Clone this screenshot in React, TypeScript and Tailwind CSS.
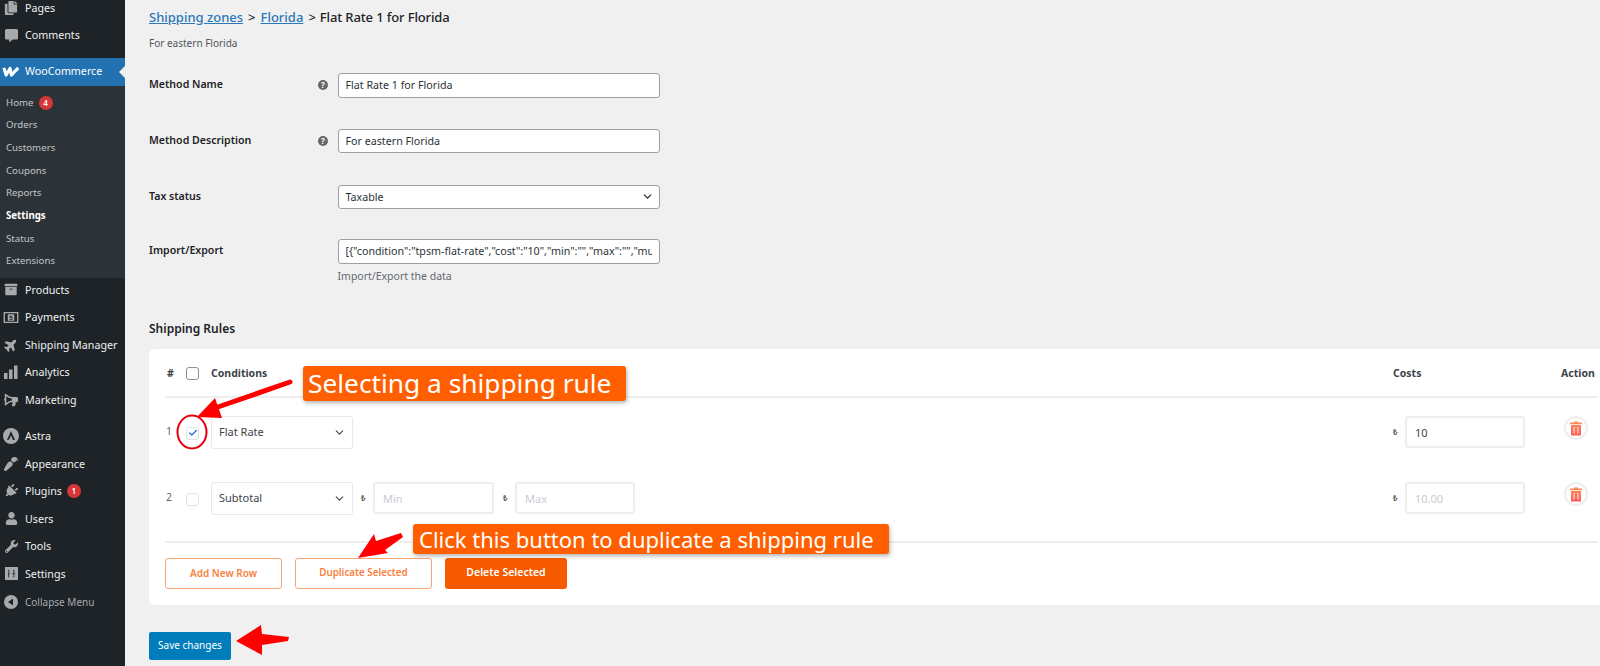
import type { ReactNode } from 'react'
import { ChevronDown, Check } from 'lucide-react'
import {
  FaArchive,
  FaBullhorn,
  FaCommentAlt,
  FaCopy,
  FaPaintBrush,
  FaPlane,
  FaPlug,
  FaUser,
  FaWrench,
} from 'react-icons/fa'

function PaymentsIcon() {
  return (
    <svg viewBox="0 0 16 14" className="h-[13px] w-[16px]">
      <path fill="#a7aaad" fillRule="evenodd" d="M0 1h16v12H0zM1.500 2.500v9h13v-9zM4.500 3.500h7v7h-7z" />
      <path fill="#1d2327" d="M6.500 5h3v1H7.500v.6h2v2.900h-3v-1h2v-.9h-2z" />
    </svg>
  )
}

function AnalyticsIcon() {
  return (
    <svg viewBox="0 0 14 14" className="h-[14px] w-[14px]" fill="#a7aaad">
      <rect x="0" y="8" width="3.500" height="6" />
      <rect x="5" y="4.500" width="3.500" height="9.500" />
      <rect x="10" y="0.500" width="3.500" height="13.500" />
    </svg>
  )
}

function AstraIcon() {
  return (
    <svg viewBox="0 0 16 16" className="h-[16px] w-[16px]">
      <circle cx="8" cy="8" r="8" fill="#a7aaad" />
      <path fill="#1d2327" d="M8 3 12 12H10L8 7.500 6.500 10.500 5.500 12H4z" />
    </svg>
  )
}

function SettingsIcon() {
  return (
    <svg viewBox="0 0 14 14" className="h-[13px] w-[13px]">
      <rect width="14" height="14" fill="#a7aaad" />
      <path fill="#1d2327" d="M3 6h2v1H4.500v4h-1V7H3zM9 3h1v4h1v1H8V7h1zM9 9h1v2H9zM3.500 3h1v2h-1z" />
    </svg>
  )
}

function CollapseIcon() {
  return (
    <svg viewBox="0 0 14 14" className="h-[14px] w-[14px]">
      <circle cx="7" cy="7" r="7" fill="#a7aaad" />
      <path fill="#1d2327" d="M9 3.500v7L4 7z" />
    </svg>
  )
}

function WooIcon() {
  return (
    <svg viewBox="0 0 20 12" className="h-[11px] w-[18px]">
      <path
        fill="none"
        stroke="#fff"
        strokeWidth="3.400"
        strokeLinejoin="round"
        d="M2 2 4.500 10 9 2.500 10.500 10 18 2"
      />
    </svg>
  )
}

function TrashIcon() {
  return (
    <svg viewBox="0 0 12 14" className="h-[15px] w-[12px]">
      <defs>
        <linearGradient id="trash" x1="0" y1="0" x2="0" y2="1">
          <stop offset="0" stopColor="#f9935a" />
          <stop offset="1" stopColor="#fb5a5a" />
        </linearGradient>
      </defs>
      <path fill="url(#trash)" d="M4 0h4v1h4v1.800H0V1h4zM1 3.500h10V14H1z" />
      <path fill="#ffd9c9" d="M3.500 5.500h1.200v6.500H3.500zM7.300 5.500h1.200v6.500H7.300z" />
    </svg>
  )
}

const topItems: [string, ReactNode][] = [
  ['Pages', <FaCopy className="h-[14px] w-[14px] text-[#a7aaad]" />],
  ['Comments', <FaCommentAlt className="h-[13px] w-[13px] text-[#a7aaad]" />],
]

const subItems = ['Home', 'Orders', 'Customers', 'Coupons', 'Reports', 'Settings', 'Status', 'Extensions']

const middleItems: [string, ReactNode][] = [
  ['Products', <FaArchive className="h-[13px] w-[14px] text-[#a7aaad]" />],
  ['Payments', <PaymentsIcon />],
  ['Shipping Manager', <FaPlane className="h-[14px] w-[14px] -rotate-45 text-[#a7aaad]" />],
  ['Analytics', <AnalyticsIcon />],
  ['Marketing', <FaBullhorn className="h-[14px] w-[14px] -scale-x-100 text-[#a7aaad]" />],
]

const bottomItems: [string, ReactNode][] = [
  ['Astra', <AstraIcon />],
  ['Appearance', <FaPaintBrush className="h-[14px] w-[14px] rotate-180 text-[#a7aaad]" />],
  ['Plugins', <FaPlug className="h-[14px] w-[14px] rotate-45 text-[#a7aaad]" />],
  ['Users', <FaUser className="h-[13px] w-[13px] text-[#a7aaad]" />],
  ['Tools', <FaWrench className="h-[13px] w-[13px] text-[#a7aaad]" />],
  ['Settings', <SettingsIcon />],
]

function Badge({ count }: { count: number }) {
  return (
    <span className="ml-[5px] flex h-[14px] w-[14px] items-center justify-center rounded-full bg-[#d63638] text-[8px] font-semibold text-white">
      {count}
    </span>
  )
}

function MenuItem({ label, icon, badge }: { label: string; icon: ReactNode; badge?: number }) {
  return (
    <div className="flex h-[27.5px] items-center text-[10.700px] text-[#f0f0f1]">
      <span className="flex w-[25px] shrink-0 justify-center pr-[3px]">{icon}</span>
      {label}
      {badge ? <Badge count={badge} /> : null}
    </div>
  )
}

function Sidebar() {
  return (
    <aside className="w-[125px] shrink-0 bg-[#1d2327]">
      <div className="-mt-[6px] pb-[8.500px]">
        {topItems.map(([label, icon]) => (
          <MenuItem key={label} label={label} icon={icon} />
        ))}
      </div>

      <div className="relative flex h-[28px] items-center bg-[#2271b1] text-[10.700px] text-white">
        <span className="flex w-[25px] shrink-0 justify-center pr-[3px]">
          <WooIcon />
        </span>
        WooCommerce
        <span className="absolute right-0 top-[8px] h-0 w-0 border-y-[6px] border-r-[6px] border-y-transparent border-r-[#f0f0f1]" />
      </div>

      <div className="bg-[#2c3338] pb-[5px] pt-[6px]">
        {subItems.map(item => (
          <div
            key={item}
            className={`flex h-[22.700px] items-center pl-[6px] text-[9.700px] ${
              item === 'Settings' ? 'font-bold text-white' : 'text-[#c3c4c7]'
            }`}
          >
            {item}
            {item === 'Home' ? <Badge count={4} /> : null}
          </div>
        ))}
      </div>

      <div className="-mt-[2px]">
        {middleItems.map(([label, icon]) => (
          <MenuItem key={label} label={label} icon={icon} />
        ))}
      </div>

      <div className="h-[9px]" />

      {bottomItems.map(([label, icon]) => (
        <MenuItem key={label} label={label} icon={icon} badge={label === 'Plugins' ? 1 : undefined} />
      ))}

      <div className="mt-[1px] flex h-[27.5px] items-center text-[10px] text-[#a7aaad]">
        <span className="flex w-[25px] shrink-0 justify-center pr-[3px]">
          <CollapseIcon />
        </span>
        Collapse Menu
      </div>
    </aside>
  )
}

function FormRow({ label, help, top, children }: { label: string; help?: boolean; top: string; children: ReactNode }) {
  return (
    <div className={`flex h-[24.500px] items-center ${top}`}>
      <label className="w-[169px] text-[10.600px] font-semibold text-[#1d2327]">{label}</label>
      <span className="flex w-[19.500px] justify-start">
        {help ? (
          <span className="flex h-[10px] w-[10px] items-center justify-center rounded-full bg-[#666] text-[8px] font-bold text-white">
            ?
          </span>
        ) : null}
      </span>
      {children}
    </div>
  )
}

function TextField({ value }: { value: string }) {
  return (
    <input
      readOnly
      value={value}
      className="h-[24.500px] w-[322px] rounded-[3px] border border-[#9ca1a7] bg-white px-[7px] text-[10.700px] text-[#2c3338] outline-none"
    />
  )
}

function RuleSelect({ value }: { value: string }) {
  return (
    <div className="flex h-[33px] w-[142px] items-center justify-between rounded-[3px] border border-[#e8e8e8] bg-white pl-[7px] pr-[6px] text-[11px] text-[#3c434a]">
      {value}
      <ChevronDown className="h-[13px] w-[13px] text-[#444]" strokeWidth={2} />
    </div>
  )
}

function Currency() {
  return <span className="w-[12px] text-[8px] font-bold leading-none text-[#666]">₺</span>
}

function RuleInput({ value, placeholder, width }: { value?: string; placeholder?: string; width: string }) {
  return (
    <input
      readOnly
      value={value ?? ''}
      placeholder={placeholder}
      className={`h-[32px] ${width} rounded-[3px] border-2 border-[#eeeeee] bg-white px-[8px] text-[11px] text-[#3c434a] outline-none placeholder:text-[#c9ccd1]`}
    />
  )
}

function RowAction() {
  return (
    <div className="-mt-[8px] ml-[39px] mr-[10px] flex h-[24px] w-[24px] items-center justify-center rounded-full border-2 border-[#eeeeee] bg-white">
      <TrashIcon />
    </div>
  )
}

function ShippingRules() {
  return (
    <section className="mt-[10px] w-[1470px] rounded-[6px] bg-white pb-[16px] pl-[16px] pr-[21px]">
      <div className="flex h-[49px] items-center border-b-2 border-[#eeeeee] pt-[3px] text-[10.500px] font-semibold text-[#3c434a]">
        <span className="w-[21px] pl-[2px] font-bold">#</span>
        <span className="mr-[12px] h-[13px] w-[13px] rounded-[3px] border border-[#8c8f94]" />
        <span className="flex-1 font-bold">Conditions</span>
        <span className="w-[168px] font-bold">Costs</span>
        <span className="w-[37px] font-bold">Action</span>
      </div>

      <div className="flex items-center pt-[18px]">
        <span className="w-[21px] pl-[1px] text-[10.500px] text-[#666]">1</span>
        <span className="mr-[12px] mt-[2px] flex h-[13px] w-[13px] items-center justify-center rounded-[3px] border border-[#e2e2e2]">
          <Check className="h-[10px] w-[10px] text-[#2a7fd5]" strokeWidth={3.500} />
        </span>
        <RuleSelect value="Flat Rate" />
        <div className="flex-1" />
        <Currency />
        <RuleInput value="10" width="w-[120px]" />
        <RowAction />
      </div>

      <div className="flex items-center pb-[26px] pt-[33px]">
        <span className="w-[21px] pl-[1px] text-[10.500px] text-[#666]">2</span>
        <span className="mr-[12px] mt-[2px] h-[13px] w-[13px] rounded-[3px] border border-[#e2e2e2]" />
        <RuleSelect value="Subtotal" />
        <span className="w-[8px]" />
        <Currency />
        <RuleInput placeholder="Min" width="w-[121px]" />
        <span className="w-[9px]" />
        <Currency />
        <RuleInput placeholder="Max" width="w-[120px]" />
        <div className="flex-1" />
        <Currency />
        <RuleInput placeholder="10.00" width="w-[120px]" />
        <RowAction />
      </div>

      <div className="flex gap-[13px] border-t-2 border-[#eeeeee] pt-[15px]">
        <button className="h-[31px] w-[117px] rounded-[3px] border border-[#f8a477] bg-white text-[10px] font-semibold text-[#f9803f]">
          Add New Row
        </button>
        <button className="h-[31px] w-[137px] rounded-[3px] border border-[#f8a477] bg-white text-[9.800px] font-semibold text-[#f9803f]">
          Duplicate Selected
        </button>
        <button className="h-[31px] w-[122px] rounded-[3px] bg-[#f55a00] text-[10.500px] font-semibold text-white">
          Delete Selected
        </button>
      </div>
    </section>
  )
}

function Annotations() {
  return (
    <>
      <div className="absolute left-[303px] top-[366px] flex h-[35px] w-[323px] items-center rounded-[3px] bg-[#ff5f00] pl-[5px] text-[26.300px] text-white shadow-[1px_2px_4px_rgba(0,0,0,0.3)]">
        Selecting a shipping rule
      </div>
      <div className="absolute left-[413px] top-[524px] flex h-[30px] w-[476px] items-center rounded-[3px] bg-[#ff5f00] pl-[6px] text-[22px] text-white shadow-[1px_2px_4px_rgba(0,0,0,0.3)]">
        Click this button to duplicate a shipping rule
      </div>

      <svg viewBox="0 0 120 78" className="absolute left-[175px] top-[375px] h-[78px] w-[120px]">
        <path d="M115 7 40 33" stroke="#f00" strokeWidth="5" strokeLinecap="round" fill="none" />
        <path d="M22 42 40 23 47 43z" fill="#f00" />
        <ellipse cx="17" cy="57" rx="14.500" ry="16.500" fill="none" stroke="#e8000b" strokeWidth="2" />
      </svg>

      <svg viewBox="0 0 50 30" className="absolute left-[355px] top-[531px] h-[30px] w-[50px]">
        <path d="M3 27 19 3 21 10 46 2 48 6 30 19 33 22z" fill="#f00" />
      </svg>

      <svg viewBox="0 0 60 34" className="absolute left-[233px] top-[623px] h-[34px] w-[60px]">
        <path d="M3 18 28 2 29 11 56 14 55 18 29 22 29 32z" fill="#f00" />
      </svg>
    </>
  )
}

export default function App() {
  return (
    <div className="relative flex h-[666px] w-[1600px] overflow-hidden bg-[#f0f0f1] font-['Noto_Sans',sans-serif]">
      <Sidebar />

      <main className="min-w-0 flex-1 pl-[24px] pt-[8px]">
        <h2 className="flex h-[20px] items-center gap-[5px] text-[13px] font-medium text-[#1d2327]">
          <a className="text-[#2a78b8] underline">Shipping zones</a>
          <span>&gt;</span>
          <a className="text-[#2a78b8] underline">Florida</a>
          <span>&gt;</span>
          <span className="-ml-[1px] tracking-[-0.01em]">Flat Rate 1 for Florida</span>
        </h2>
        <p className="mt-[8px] h-[14px] text-[10px] leading-[14px] text-[#50575e]">For eastern Florida</p>

        <FormRow label="Method Name" help top="mt-[23px]">
          <TextField value="Flat Rate 1 for Florida" />
        </FormRow>
        <FormRow label="Method Description" help top="mt-[31px]">
          <TextField value="For eastern Florida" />
        </FormRow>
        <FormRow label="Tax status" top="mt-[31.500px]">
          <div className="flex h-[24.500px] w-[322px] items-center justify-between rounded-[3px] border border-[#9ca1a7] bg-white pl-[7px] pr-[5px] text-[10.700px] text-[#2c3338]">
            Taxable
            <ChevronDown className="h-[13px] w-[13px]" strokeWidth={2.500} />
          </div>
        </FormRow>
        <FormRow label="Import/Export" top="mt-[30px]">
          <TextField value={'[{"condition":"tpsm-flat-rate","cost":"10","min":"","max":"","multiply":"","per_class":""}]'} />
        </FormRow>
        <p className="ml-[188.500px] mt-[4px] h-[16px] text-[10.500px] leading-[16px] text-[#646970]">Import/Export the data</p>

        <h3 className="mt-[35px] h-[20px] text-[12px] font-semibold leading-[20px] text-[#1d2327]">Shipping Rules</h3>

        <ShippingRules />

        <button className="mt-[27px] h-[28px] w-[82px] rounded-[2px] bg-[#007cba] text-[10px] text-white">
          Save changes
        </button>
      </main>

      <Annotations />
    </div>
  )
}
